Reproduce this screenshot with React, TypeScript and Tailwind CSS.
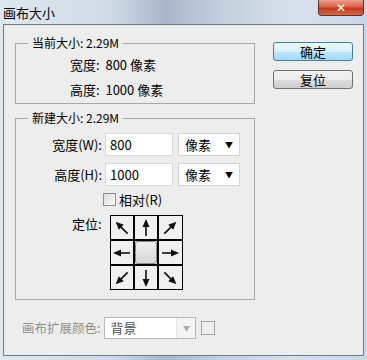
import React from "react";

const FONT = "font-['Noto_Sans_CJK_SC','Liberation_Sans',sans-serif]";

function Arrow({ angle }: { angle: number }) {
  return (
    <svg width="20" height="20" viewBox="0 0 20 20">
      <g transform={`rotate(${angle} 10 10)`}>
        <line x1="10" y1="18" x2="10" y2="7" stroke="#111" strokeWidth="1.6" />
        <polygon points="10,1 6.5,9 13.5,9" fill="#111" />
      </g>
    </svg>
  );
}

function UnitSelect() {
  return (
    <div className="w-[62px] h-[23px] bg-white border border-[#d4d4d4] flex items-center justify-between pl-[6px] pr-[6px]">
      <span className="text-[13px] text-black leading-none">像素</span>
      <span className="text-[8px] leading-none text-black">▼</span>
    </div>
  );
}

export default function App() {
  const arrows: (number | null)[] = [-45, 0, 45, -90, null, 90, -135, 180, 135];

  return (
    <div className={`w-[367px] h-[360px] flex flex-col bg-[linear-gradient(90deg,#dfe7ef_0%,#cfdbe7_30%,#a8b7c8_45%,#c3d0dd_60%,#d6e1ec_80%,#c9d7e6_100%)] ${FONT}`}>
      <div className="h-[24px] flex items-start justify-between pl-[3px]">
        <span className="text-[13px] text-black leading-none mt-[6px]">画布大小</span>
        <div className="w-[46px] h-[16px] mr-[3px] rounded-b-[4px] border border-t-0 border-[#6b2a22] bg-[linear-gradient(180deg,#eba08e_0%,#d8614a_45%,#c23a22_55%,#d46a4c_100%)] flex items-center justify-center">
          <span className="text-white text-[12px] font-bold leading-none font-['DejaVu_Sans',sans-serif]">✕</span>
        </div>
      </div>

      <div className="flex-1 mx-[3px] mb-[4px] bg-[#ededed] border border-[#6e7b8b] flex pl-[11px] pt-[10px]">
        <div className="w-[240px] flex flex-col">
          <fieldset className="h-[69px] border border-[#a8a8a8] px-0">
            <legend className="ml-[12px] px-[4px] text-[12px] leading-[16px] text-black">当前大小: 2.29M</legend>
            <div className="pl-[54px] mt-[6px] text-[13px] leading-[16px] text-black">宽度:&nbsp; 800 像素</div>
            <div className="pl-[54px] mt-[9px] text-[13px] leading-[16px] text-black">高度:&nbsp; 1000 像素</div>
          </fieldset>

          <fieldset className="mt-[6px] h-[190px] border border-[#a8a8a8] px-0">
            <legend className="ml-[12px] px-[4px] text-[12px] leading-[16px] text-black">新建大小: 2.29M</legend>
            <div className="mt-[7px] flex items-center h-[23px]">
              <span className="w-[86px] text-right text-[13px] text-black">宽度(W):</span>
              <div className="ml-[3px] w-[68px] h-[23px] bg-white border border-[#dadada] flex items-center pl-[4px] text-[13px] text-black">800</div>
              <div className="ml-[5px]"><UnitSelect /></div>
            </div>
            <div className="mt-[7px] flex items-center h-[23px]">
              <span className="w-[86px] text-right text-[13px] text-black">高度(H):</span>
              <div className="ml-[3px] w-[68px] h-[23px] bg-white border border-[#dadada] flex items-center pl-[4px] text-[13px] text-black">1000</div>
              <div className="ml-[5px]"><UnitSelect /></div>
            </div>
            <div className="mt-[6px] h-[14px] flex items-center pl-[87px]">
              <div className="w-[13px] h-[13px] border border-[#8e8f8f] bg-[linear-gradient(135deg,#dcdcdc,#fbfbfb)]" />
              <span className="ml-[3px] text-[13px] text-black leading-none">相对(R)</span>
            </div>
            <div className="mt-[9px] flex items-start">
              <span className="ml-[56px] mt-[1px] text-[13px] leading-[16px] text-black">定位:</span>
              <div className="ml-[8px] grid grid-cols-3 gap-[2px] p-px bg-black w-[73px]">
                {arrows.map((a, i) => (
                  <div key={i} className="h-[23px] bg-[#f0f0f0] flex items-center justify-center">
                    {a === null ? (
                      <div className="w-[22px] h-[23px] rounded-[3px] border border-[#8a8a8a] bg-[linear-gradient(180deg,#eeeeee,#d6d6d6)]" />
                    ) : (
                      <Arrow angle={a} />
                    )}
                  </div>
                ))}
              </div>
            </div>
          </fieldset>

          <div className="mt-[17px] flex items-center">
            <span className="ml-[7px] text-[12.5px] text-[#8d8d8d]">画布扩展颜色:</span>
            <div className="ml-[4px] w-[92px] h-[22px] border border-[#b8b8b8] bg-[#f4f4f4] flex">
              <div className="w-[72px] bg-white border-r border-[#e6e6e6] flex items-center pl-[5px] text-[13px] text-[#555]">背景</div>
              <div className="flex-1 flex items-center justify-center text-[7px] text-[#aaa]">▼</div>
            </div>
            <div className="ml-[5px] w-[14px] h-[14px] border border-[#a8a8a8]" />
          </div>
        </div>

        <div className="ml-[18px] mt-[7px] flex flex-col">
          <button className="w-[80px] h-[19px] rounded-[3px] border border-[#3c7fb1] bg-[linear-gradient(180deg,#eaf6fd_0%,#d9f0fc_50%,#bee6fd_51%,#a7d9f5_100%)] text-[13px] leading-none text-black">确定</button>
          <button className="mt-[9px] w-[80px] h-[19px] rounded-[3px] border border-[#707070] bg-[linear-gradient(180deg,#f2f2f2_0%,#ebebeb_50%,#dddddd_51%,#cfcfcf_100%)] text-[13px] leading-none text-black">复位</button>
        </div>
      </div>
    </div>
  );
}
